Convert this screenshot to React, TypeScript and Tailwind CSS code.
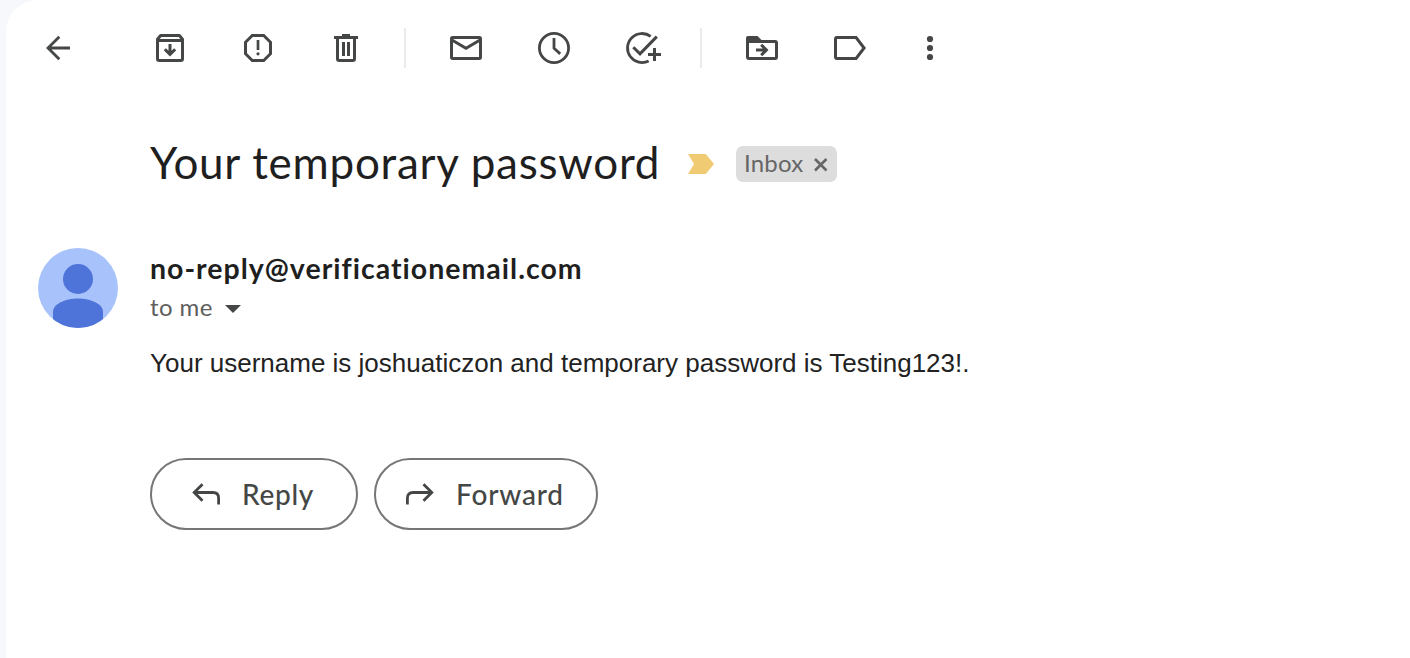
import type { ReactNode } from "react";

function Icon({ children }: { children: ReactNode }) {
  return (
    <svg viewBox="0 0 40 40" className="block size-10" fill="none" stroke="currentColor" strokeWidth="3">
      {children}
    </svg>
  );
}

function IconButton({ label, children }: { label: string; children: ReactNode }) {
  return (
    <button aria-label={label} className="size-10 shrink-0">
      <Icon>{children}</Icon>
    </button>
  );
}

function Divider() {
  return <div className="h-10 w-0.5 shrink-0 bg-[#ececec]" />;
}

function Toolbar() {
  return (
    <div className="flex h-10 items-center text-[#444746]">
      <IconButton label="Back">
        <path d="M32 20H10M21.3 8.8L10 20l11.3 11.2" strokeWidth="2.8" />
      </IconButton>
      <div className="ml-[72px] flex gap-12">
        <IconButton label="Archive">
          <path d="M7.5 11.2L10.6 7.5h18.8l3.1 3.7v19.5q0 1.8-1.8 1.8H9.3q-1.8 0-1.8-1.8z" strokeLinejoin="round" />
          <path d="M7.5 12.4h25M20 16v10M14.8 21.2l5.2 5.2 5.2-5.2" />
        </IconButton>
        <IconButton label="Report spam">
          <path d="M14.3 7.5h11.4l6.8 6.8v11.4l-6.8 6.8H14.3l-6.8-6.8V14.3z" />
          <path d="M20 12v10" strokeWidth="2.7" />
          <circle cx="20" cy="25.8" r="1.6" fill="currentColor" stroke="none" />
        </IconButton>
        <IconButton label="Delete">
          <path d="M8 9.5h24M16 7.5h8M11.5 10v20.7q0 1.8 1.8 1.8h13.4q1.8 0 1.8-1.8V10" />
          <path d="M17.500 14v14M22.500 14v14" />
        </IconButton>
      </div>
      <div className="ml-[38px]"><Divider /></div>
      <div className="ml-10 flex gap-12">
        <IconButton label="Mark as unread">
          <rect x="5.5" y="9.5" width="29" height="21" rx="1.2" />
          <path d="M5.5 11.7L20 20.2l14.5-8.5" />
        </IconButton>
        <IconButton label="Snooze">
          <circle cx="20" cy="20" r="14.6" strokeWidth="2.8" />
          <path d="M20 10v10.2l6.2 5.7" strokeWidth="2.8" />
        </IconButton>
        <IconButton label="Add to Tasks">
          <path d="M28.7 8.4A14.5 14.5 0 1 0 26.7 32.9" strokeWidth="2.8" />
          <path d="M11.3 19.2L18 25.8 34.8 8.6" />
          <path d="M32.5 20v13M26 26.5h13" />
        </IconButton>
      </div>
      <div className="ml-[38px]"><Divider /></div>
      <div className="ml-10 flex gap-12">
        <IconButton label="Move to">
          <path d="M4 14V10q0-2 2-2h9.5l4 4v2z" fill="currentColor" stroke="none" />
          <path d="M5.5 13.5h27.6q1.4 0 1.4 1.4v14.2q0 1.4-1.4 1.4H6.9q-1.4 0-1.4-1.4z" />
          <path d="M14 22h10.5M19.2 16.8l5.2 5.2-5.2 5.2" />
        </IconButton>
        <IconButton label="Labels">
          <path d="M6.9 9.5h19.2L34.1 20l-8 10.5H6.9q-1.4 0-1.4-1.4V10.9q0-1.4 1.4-1.4z" />
        </IconButton>
      </div>
      <div className="ml-10 flex">
        <IconButton label="More">
          <g fill="currentColor" stroke="none">
            <circle cx="20" cy="11" r="3.1" />
            <circle cx="20" cy="20" r="3.1" />
            <circle cx="20" cy="29" r="3.1" />
          </g>
        </IconButton>
      </div>
    </div>
  );
}

function Subject() {
  return (
    <div className="mt-[70px] flex h-[52px] items-center pl-28">
      <h1 className="w-[538px] shrink-0 whitespace-nowrap pb-1 text-[44px] leading-[52px] tracking-[0.74px] text-[#1f1f1f]">
        Your temporary password
      </h1>
      <svg viewBox="0 0 26 20" className="h-5 w-[26px] shrink-0">
        <path d="M0 0h17.8L26 10l-8.200 10H0l6-10z" fill="#f1cb73" />
      </svg>
      <div className="ml-[22px] flex h-9 w-[101px] items-center rounded-[7px] bg-[#dddddd] pl-2 text-[#666666]">
        <span className="w-[70px] pb-0.5 text-2xl leading-[34px] tracking-[0.2px]">Inbox</span>
        <svg viewBox="0 0 14 14" className="mt-0.5 size-3.5" stroke="currentColor" strokeWidth="2.6">
          <path d="M1 1l11.500 11.500M12.500 1L1 12.500" />
        </svg>
      </div>
    </div>
  );
}

function Avatar() {
  return (
    <svg viewBox="0 0 80 80" className="size-20 shrink-0">
      <defs>
        <clipPath id="avatar-disc">
          <circle cx="40" cy="40" r="40" />
        </clipPath>
      </defs>
      <g clipPath="url(#avatar-disc)">
        <rect width="80" height="80" fill="#a8c2fb" />
        <circle cx="40" cy="31" r="15" fill="#4e73d9" />
        <path d="M15 80V64C15 56 27 50.500 40 50.500S65 56 65 64V80z" fill="#4e73d9" />
      </g>
    </svg>
  );
}

function Message() {
  return (
    <div className="mt-[58px] flex gap-8">
      <Avatar />
      <div>
        <div className="h-10 whitespace-nowrap text-[28.5px] font-bold leading-10 tracking-[1px] text-[#1f1f1f]">
          no-reply@verificationemail.com
        </div>
        <div className="flex h-10 items-center text-[#5e5e5e]">
          <span className="w-[75px] pb-0.5 text-2xl leading-[38px] tracking-[0.4px]">to me</span>
          <svg viewBox="0 0 16 8" className="mt-0.5 h-2 w-4" fill="#444746">
            <path d="M0 0h16L8 8z" />
          </svg>
        </div>
        <p className="mt-[15px] h-10 whitespace-nowrap font-['Liberation_Sans',Arial,sans-serif] text-[26px] leading-10 text-[#222222]">
          Your username is joshuaticzon and temporary password is Testing123!.
        </p>
        <div className="mt-[75px] flex gap-4 text-[#444746]">
          <button className="flex h-[72px] w-[208px] items-center rounded-full border-2 border-[#747775] pl-10 text-[28px] font-medium tracking-[0.7px]">
            <svg viewBox="0 0 28 22" className="h-[22px] w-7 shrink-0" fill="none" stroke="currentColor" strokeWidth="2.8">
              <path d="M10.500 1.200L2.200 9.500l8.300 8.300M2.500 9.500H21q5.600 0 5.600 5.600V21.500" />
            </svg>
            <span className="ml-[22px]">Reply</span>
          </button>
          <button className="flex h-[72px] w-[224px] items-center rounded-full border-2 border-[#747775] pl-[30px] text-[28px] font-medium tracking-[0.8px]">
            <svg viewBox="0 0 28 22" className="h-[22px] w-7 shrink-0" fill="none" stroke="currentColor" strokeWidth="2.8">
              <path d="M17.500 1.200L25.800 9.500l-8.300 8.300M25.500 9.500H7q-5.600 0-5.600 5.600V21.500" />
            </svg>
            <span className="ml-[22px]">Forward</span>
          </button>
        </div>
      </div>
    </div>
  );
}

export default function App() {
  return (
    <div className="h-[658px] w-full overflow-hidden bg-[#f6f8fc] pl-1.5 font-['Lato',sans-serif]">
      <main className="h-full rounded-tl-[32px] bg-white pl-8 pt-7">
        <Toolbar />
        <Subject />
        <Message />
      </main>
    </div>
  );
}
